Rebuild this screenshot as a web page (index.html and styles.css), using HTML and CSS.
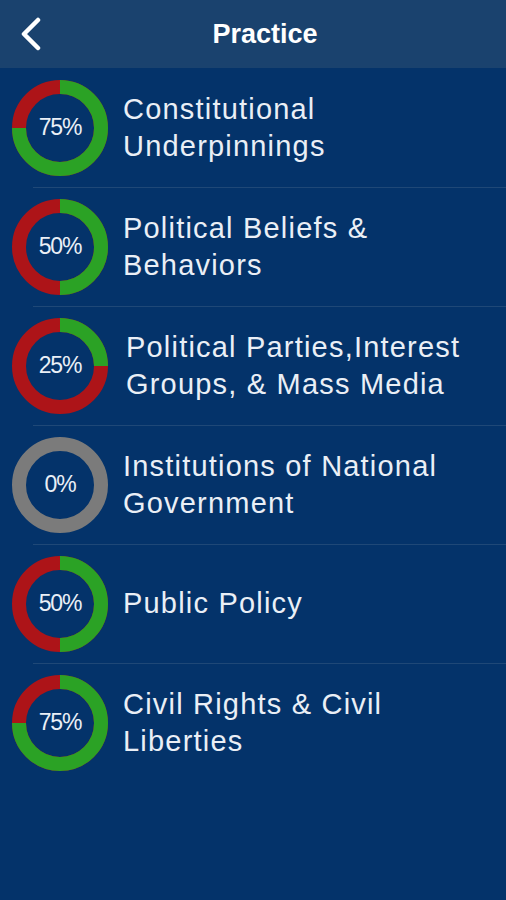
FILE: index.html
```html
<!DOCTYPE html>
<html>
<head>
    <link rel="stylesheet" href="styles.css">
</head>
<body>
    <div class="topbar">
        <svg class="back" width="24" height="34" viewBox="0 0 24 34">
            <path d="M20 3 L6 17 L20 31" fill="none" stroke="#fff" stroke-width="4.5" stroke-linecap="round" stroke-linejoin="round"/>
        </svg>
        <h1>Practice</h1>
        <span></span>
    </div>
    <ul class="topics">
        <li>
            <div class="ring">
                <svg width="96" height="96" viewBox="0 0 96 96">
                    <circle cx="48" cy="48" r="41" class="bad"/>
                    <circle cx="48" cy="48" r="41" class="good" pathLength="100" stroke-dasharray="75 100" transform="rotate(-90 48 48)"/>
                </svg>
                <span>75%</span>
            </div>
            <p>Constitutional<br>Underpinnings</p>
        </li>
        <li>
            <div class="ring">
                <svg width="96" height="96" viewBox="0 0 96 96">
                    <circle cx="48" cy="48" r="41" class="bad"/>
                    <circle cx="48" cy="48" r="41" class="good" pathLength="100" stroke-dasharray="50 100" transform="rotate(-90 48 48)"/>
                </svg>
                <span>50%</span>
            </div>
            <p>Political Beliefs &amp;<br>Behaviors</p>
        </li>
        <li>
            <div class="ring">
                <svg width="96" height="96" viewBox="0 0 96 96">
                    <circle cx="48" cy="48" r="41" class="bad"/>
                    <circle cx="48" cy="48" r="41" class="good" pathLength="100" stroke-dasharray="25 100" transform="rotate(-90 48 48)"/>
                </svg>
                <span>25%</span>
            </div>
            <p class="nudge">Political Parties,Interest<br>Groups, &amp; Mass Media</p>
        </li>
        <li>
            <div class="ring">
                <svg width="96" height="96" viewBox="0 0 96 96">
                    <circle cx="48" cy="48" r="41" class="none"/>
                </svg>
                <span>0%</span>
            </div>
            <p>Institutions of National<br>Government</p>
        </li>
        <li>
            <div class="ring">
                <svg width="96" height="96" viewBox="0 0 96 96">
                    <circle cx="48" cy="48" r="41" class="bad"/>
                    <circle cx="48" cy="48" r="41" class="good" pathLength="100" stroke-dasharray="50 100" transform="rotate(-90 48 48)"/>
                </svg>
                <span>50%</span>
            </div>
            <p>Public Policy</p>
        </li>
        <li>
            <div class="ring">
                <svg width="96" height="96" viewBox="0 0 96 96">
                    <circle cx="48" cy="48" r="41" class="bad"/>
                    <circle cx="48" cy="48" r="41" class="good" pathLength="100" stroke-dasharray="75 100" transform="rotate(-90 48 48)"/>
                </svg>
                <span>75%</span>
            </div>
            <p>Civil Rights &amp; Civil<br>Liberties</p>
        </li>
    </ul>
</body>
</html>
```

FILE: styles.css
```css
html, body
{
    margin: 0;
    height: 100%;
}
body
{
    background-color: #04336a;
    font-family: "Liberation Sans", Arial, sans-serif;
    color: #eaeff6;
}
.topbar
{
    height: 68px;
    background-color: #1a426e;
    display: grid;
    grid-template-columns: 70px 1fr 46px;
    align-items: center;
}
.back
{
    margin-left: 18px;
}
.topbar h1
{
    margin: 0;
    text-align: center;
    font-size: 27px;
    font-weight: bold;
    color: #fff;
}
.topics
{
    list-style-type: none;
    margin: 0;
    padding: 0;
}
.topics li
{
    height: 119px;
    display: flex;
    align-items: center;
    padding-left: 12px;
    position: relative;
}
.topics li + li::before
{
    content: "";
    position: absolute;
    top: 0;
    left: 33px;
    right: 0;
    height: 1px;
    background-color: #1f4877;
}
.ring
{
    position: relative;
    width: 96px;
    height: 96px;
    flex-shrink: 0;
}
.ring svg
{
    display: block;
}
.ring circle
{
    fill: none;
    stroke-width: 14;
}
.ring .bad
{
    stroke: #ad1418;
}
.ring .good
{
    stroke: #2ba225;
}
.ring .none
{
    stroke: #7b7b7b;
}
.ring span
{
    position: absolute;
    inset: 0;
    display: flex;
    align-items: center;
    justify-content: center;
    font-size: 23px;
    letter-spacing: -1.2px;
}
.topics p
{
    margin: 0 0 0 15px;
    font-size: 29px;
    line-height: 37px;
    letter-spacing: 1.2px;
}
.topics p.nudge
{
    margin-left: 18px;
}
```
